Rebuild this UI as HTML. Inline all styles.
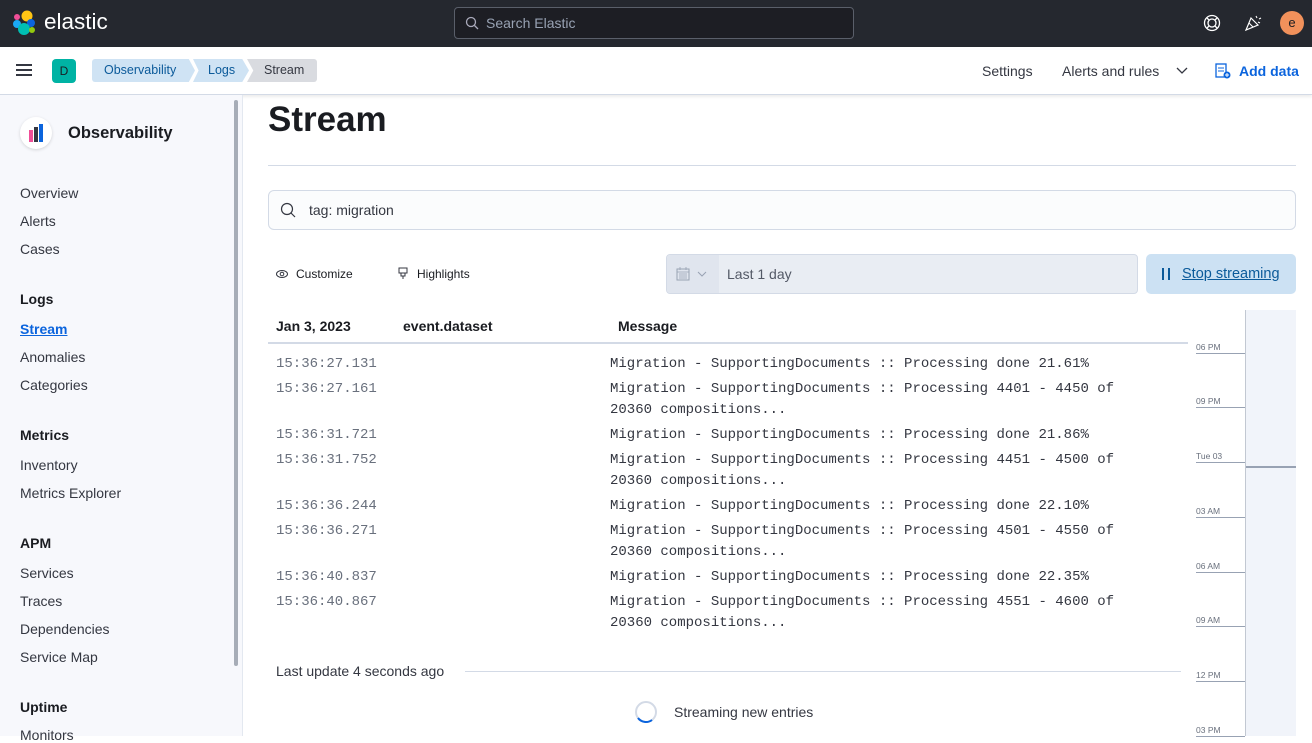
<!DOCTYPE html>
<html><head><style>
*{box-sizing:border-box;margin:0;padding:0}
body{width:1312px;height:736px;overflow:hidden;font-family:"Liberation Sans",sans-serif;background:#fff;position:relative;color:#1a1c21}
.abs{position:absolute}
.top{left:0;top:0;width:1312px;height:47px;background:#25282f}
.sub{left:0;top:47px;width:1312px;height:48px;background:#fff;border-bottom:1px solid #d3dae6;box-shadow:0 2px 3px rgba(0,0,0,.08)}
.side{left:0;top:95px;width:243px;height:641px;background:#f7f8fc;border-right:1px solid #e3e8f0}
.nav{position:absolute;left:20px;font-size:14px;color:#343741}
.navh{position:absolute;left:20px;font-size:14px;font-weight:bold;color:#1a1c21}
.mono{font-family:"Liberation Mono",monospace;font-size:14px;color:#343741;position:absolute;line-height:21px}
.ts{color:#69707d}
.tick{position:absolute;left:1196px;width:49px;border-bottom:1px solid #98a2b3;font-size:8.5px;color:#69707d;height:12px;line-height:10px}
</style></head><body>
<div class="abs top"></div>
<svg class="abs" style="left:12px;top:10px" width="26" height="26" viewBox="0 0 26 26">
<circle cx="15" cy="6" r="5.5" fill="#fec514"/><circle cx="5" cy="7" r="3" fill="#f04e98"/><circle cx="5" cy="14" r="4" fill="#1ba9f5"/><circle cx="19" cy="13" r="4" fill="#0b64dd"/><circle cx="12" cy="19" r="6" fill="#00bfb3"/><circle cx="20" cy="20" r="3" fill="#93c90e"/></svg>
<div class="abs" style="left:44px;top:9px;font-size:22.5px;color:#fff">elastic</div>
<div class="abs" style="left:454px;top:7px;width:400px;height:32px;border:1px solid #5a5f6a;border-radius:4px;background:#1d1e24"></div>
<svg class="abs" style="left:465px;top:16px" width="14" height="14"><circle cx="6" cy="6" r="4.5" stroke="#aab" stroke-width="1.3" fill="none"/><path d="M9.5 9.5l3.5 3.5" stroke="#aab" stroke-width="1.3"/></svg>
<div class="abs" style="left:486px;top:15px;font-size:14px;color:#98a2b3">Search Elastic</div>
<svg class="abs" style="left:1202px;top:13px" width="20" height="20"><circle cx="10" cy="10" r="7.5" stroke="#fff" stroke-width="1.3" fill="none"/><circle cx="10" cy="10" r="4" stroke="#fff" stroke-width="1.3" fill="none"/><path d="M5 5l2 2M15 5l-2 2M5 15l2-2M15 15l-2-2" stroke="#fff" stroke-width="1.3"/></svg>
<svg class="abs" style="left:1243px;top:13px" width="20" height="20"><path d="M3 17L8 5l7 7z" stroke="#fff" stroke-width="1.2" fill="none"/><path d="M6 10l4 4M13 3l1 2M16 6l2-1M15 9l2 1" stroke="#fff" stroke-width="1.1"/></svg>
<div class="abs" style="left:1280px;top:11px;width:24px;height:24px;border-radius:50%;background:#f1915b;font-size:13px;text-align:center;line-height:24px">e</div>

<div class="abs sub"></div>
<div class="abs" style="left:16px;top:64px;width:16px;height:2px;background:#343741;box-shadow:0 5px 0 #343741,0 10px 0 #343741"></div>
<div class="abs" style="left:52px;top:59px;width:24px;height:24px;border-radius:4px;background:#00b3a4;font-size:12px;text-align:center;line-height:24px">D</div>
<div class="abs" style="left:92px;top:59px;width:103px;height:23px;background:#cfe3f4;border-radius:3px 0 0 3px;clip-path:polygon(0 0,94% 0,100% 50%,94% 100%,0 100%);font-size:12.5px;color:#0b5a9a;line-height:23px;padding-left:12px">Observability</div>
<div class="abs" style="left:193px;top:59px;width:56px;height:23px;background:#cfe3f4;clip-path:polygon(0 0,88% 0,100% 50%,88% 100%,0 100%,10% 50%);font-size:12.5px;color:#0b5a9a;line-height:23px;padding-left:15px">Logs</div>
<div class="abs" style="left:247px;top:59px;width:70px;height:23px;background:#d9dbe0;border-radius:0 3px 3px 0;clip-path:polygon(0 0,100% 0,100% 100%,0 100%,9% 50%);font-size:12.5px;color:#343741;line-height:23px;padding-left:17px">Stream</div>
<div class="abs" style="left:982px;top:63px;font-size:14px;color:#343741">Settings</div>
<div class="abs" style="left:1062px;top:63px;font-size:14px;color:#343741">Alerts and rules</div>
<svg class="abs" style="left:1176px;top:67px" width="12" height="8"><path d="M1 1l5 5 5-5" stroke="#343741" stroke-width="1.3" fill="none"/></svg>
<svg class="abs" style="left:1215px;top:63px" width="16" height="16"><rect x="1" y="1" width="10" height="13" stroke="#0b64dd" stroke-width="1.3" fill="none"/><path d="M3 5h6M3 8h6" stroke="#0b64dd"/><circle cx="12" cy="12" r="3.5" fill="#0b64dd"/><path d="M12 10v4M10 12h4" stroke="#fff"/></svg>
<div class="abs" style="left:1239px;top:63px;font-size:14px;color:#0b64dd;font-weight:bold">Add data</div>

<div class="abs side"></div>
<div class="abs" style="left:234px;top:100px;width:4px;height:566px;background:#a7adb7;border-radius:2px"></div>
<div class="abs" style="left:20px;top:117px;width:32px;height:32px;border-radius:50%;background:#fff;box-shadow:0 1px 3px rgba(0,0,0,.15)"></div>
<div class="abs" style="left:29px;top:130px;width:4px;height:12px;background:#f04e98"></div>
<div class="abs" style="left:34px;top:127px;width:4px;height:15px;background:#343741"></div>
<div class="abs" style="left:39px;top:124px;width:4px;height:18px;background:#0b64dd"></div>
<div class="abs" style="left:68px;top:124px;font-size:16.5px;font-weight:bold">Observability</div>
<div class="nav" style="top:185px">Overview</div>
<div class="nav" style="top:213px">Alerts</div>
<div class="nav" style="top:241px">Cases</div>
<div class="navh" style="top:291px">Logs</div>
<div class="nav" style="top:321px;color:#0b64dd;font-weight:bold;text-decoration:underline">Stream</div>
<div class="nav" style="top:349px">Anomalies</div>
<div class="nav" style="top:377px">Categories</div>
<div class="navh" style="top:427px">Metrics</div>
<div class="nav" style="top:457px">Inventory</div>
<div class="nav" style="top:485px">Metrics Explorer</div>
<div class="navh" style="top:535px">APM</div>
<div class="nav" style="top:565px">Services</div>
<div class="nav" style="top:593px">Traces</div>
<div class="nav" style="top:621px">Dependencies</div>
<div class="nav" style="top:649px">Service Map</div>
<div class="navh" style="top:699px">Uptime</div>
<div class="nav" style="top:727px">Monitors</div>

<div class="abs" style="left:268px;top:100px;font-size:35px;font-weight:bold">Stream</div>
<div class="abs" style="left:268px;top:165px;width:1028px;height:1px;background:#d3dae6"></div>
<div class="abs" style="left:268px;top:190px;width:1028px;height:40px;border:1px solid #d3dae6;border-radius:6px;background:#fbfcfd"></div>
<svg class="abs" style="left:280px;top:202px" width="16" height="16"><circle cx="7" cy="7" r="5.5" stroke="#343741" stroke-width="1.2" fill="none"/><path d="M11 11l4 4" stroke="#343741" stroke-width="1.2"/></svg>
<div class="abs" style="left:309px;top:202px;font-size:14px;color:#343741">tag: migration</div>

<svg class="abs" style="left:276px;top:268px" width="12" height="12"><ellipse cx="6" cy="6" rx="5.5" ry="3.5" stroke="#343741" fill="none"/><circle cx="6" cy="6" r="1.8" stroke="#343741" fill="none"/></svg>
<div class="abs" style="left:296px;top:267px;font-size:12px;color:#1a1c21">Customize</div>
<svg class="abs" style="left:398px;top:267px" width="10" height="12"><path d="M1 1h8v5H1zM3 6v3h4V6M5 9v3" stroke="#343741" fill="none"/></svg>
<div class="abs" style="left:417px;top:267px;font-size:12px;color:#1a1c21">Highlights</div>
<div class="abs" style="left:666px;top:254px;width:472px;height:40px;border:1px solid #d3dae6;border-radius:4px;background:#e9edf3"></div>
<div class="abs" style="left:667px;top:255px;width:52px;height:38px;background:#e0e5ee;border-radius:4px 0 0 4px"></div>
<svg class="abs" style="left:676px;top:267px" width="14" height="14"><rect x="1" y="2" width="12" height="11" stroke="#98a2b3" fill="none"/><path d="M1 5h12M4 0v3M10 0v3M3 7h8M3 9h8M3 11h8" stroke="#98a2b3" stroke-width=".8"/></svg>
<svg class="abs" style="left:697px;top:271px" width="10" height="6"><path d="M1 1l4 4 4-4" stroke="#98a2b3" fill="none"/></svg>
<div class="abs" style="left:727px;top:266px;font-size:14px;color:#535966">Last 1 day</div>
<div class="abs" style="left:1146px;top:254px;width:150px;height:40px;border-radius:5px;background:#cce1f3"></div>
<div class="abs" style="left:1162px;top:268px;width:2px;height:12px;background:#0b5a9a;box-shadow:6px 0 0 #0b5a9a"></div>
<div class="abs" style="left:1182px;top:266px;font-size:14.5px;color:#0b5a9a;text-decoration:underline">Stop streaming</div>

<div class="abs" style="left:276px;top:318px;font-size:14px;font-weight:bold">Jan 3, 2023</div>
<div class="abs" style="left:403px;top:318px;font-size:14px;font-weight:bold">event.dataset</div>
<div class="abs" style="left:618px;top:318px;font-size:14px;font-weight:bold">Message</div>
<div class="abs" style="left:268px;top:342px;width:920px;height:2px;background:#d3dae6"></div>

<div class="mono ts" style="left:276px;top:354px">15:36:27.131</div><div class="mono" style="left:610px;top:354px">Migration - SupportingDocuments :: Processing done 21.61%</div>
<div class="mono ts" style="left:276px;top:379px">15:36:27.161</div><div class="mono" style="left:610px;top:379px">Migration - SupportingDocuments :: Processing 4401 - 4450 of<br>20360 compositions...</div>
<div class="mono ts" style="left:276px;top:425px">15:36:31.721</div><div class="mono" style="left:610px;top:425px">Migration - SupportingDocuments :: Processing done 21.86%</div>
<div class="mono ts" style="left:276px;top:450px">15:36:31.752</div><div class="mono" style="left:610px;top:450px">Migration - SupportingDocuments :: Processing 4451 - 4500 of<br>20360 compositions...</div>
<div class="mono ts" style="left:276px;top:496px">15:36:36.244</div><div class="mono" style="left:610px;top:496px">Migration - SupportingDocuments :: Processing done 22.10%</div>
<div class="mono ts" style="left:276px;top:521px">15:36:36.271</div><div class="mono" style="left:610px;top:521px">Migration - SupportingDocuments :: Processing 4501 - 4550 of<br>20360 compositions...</div>
<div class="mono ts" style="left:276px;top:567px">15:36:40.837</div><div class="mono" style="left:610px;top:567px">Migration - SupportingDocuments :: Processing done 22.35%</div>
<div class="mono ts" style="left:276px;top:592px">15:36:40.867</div><div class="mono" style="left:610px;top:592px">Migration - SupportingDocuments :: Processing 4551 - 4600 of<br>20360 compositions...</div>

<div class="abs" style="left:276px;top:663px;font-size:14px;color:#343741">Last update 4 seconds ago</div>
<div class="abs" style="left:465px;top:671px;width:716px;height:1px;background:#d3dae6"></div>
<svg class="abs" style="left:634px;top:700px" width="24" height="24"><circle cx="12" cy="12" r="10" stroke="#d3dae6" stroke-width="2" fill="none"/><path d="M4 18a10 10 0 0 0 14 2" stroke="#0b64dd" stroke-width="2" fill="none"/></svg>
<div class="abs" style="left:674px;top:704px;font-size:14px;color:#343741">Streaming new entries</div>

<div class="abs" style="left:1245px;top:310px;width:51px;height:426px;background:#f1f4fa;border-left:1px solid #c2c8d2"></div>
<div class="abs" style="left:1246px;top:466px;width:50px;height:2px;background:#98a2b3"></div>
<div class="tick" style="top:342px">06 PM</div>
<div class="tick" style="top:396px">09 PM</div>
<div class="tick" style="top:451px">Tue 03</div>
<div class="tick" style="top:506px">03 AM</div>
<div class="tick" style="top:561px">06 AM</div>
<div class="tick" style="top:615px">09 AM</div>
<div class="tick" style="top:670px">12 PM</div>
<div class="tick" style="top:725px">03 PM</div>
</body></html>
